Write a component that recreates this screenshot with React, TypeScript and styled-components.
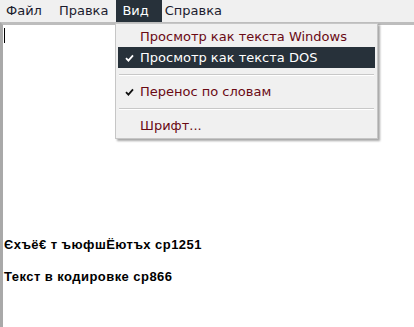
import React from "react";
import styled, { createGlobalStyle } from "styled-components";

const GlobalStyle = createGlobalStyle`
  html, body {
    margin: 0;
    padding: 0;
    background: #ffffff;
  }
  #root {
    height: 327px;
  }
`;

const menuItems = [
  { label: "Файл", active: false, after: 5 },
  { label: "Правка", active: false, after: 2 },
  { label: "Вид", active: true, after: -3 },
  { label: "Справка", active: false, after: 0 },
];

interface DropItem {
  label: string;
  checked?: boolean;
  highlighted?: boolean;
  separatorAfter?: boolean;
}

const viewItems: DropItem[] = [
  { label: "Просмотр как текста Windows" },
  { label: "Просмотр как текста DOS", checked: true, highlighted: true, separatorAfter: true },
  { label: "Перенос по словам", checked: true, separatorAfter: true },
  { label: "Шрифт..." },
];

const Check = () => (
  <svg width="9" height="8" viewBox="0 0 9 8">
    <path d="M1 4.2 L3.4 6.6 L8 1.4" fill="none" stroke="currentColor" strokeWidth="1.8" />
  </svg>
);

const App = () => {
  return (
    <Window>
      <GlobalStyle />
      <MenuBar>
        {menuItems.map((m) => (
          <MenuTitle key={m.label} active={m.active} after={m.after}>
            {m.label}
          </MenuTitle>
        ))}
      </MenuBar>
      <Editor>
        <Caret />
        <BodyLine style={{ marginTop: 194 }}>Єхъё€ т ъюфшЁютъх cp1251</BodyLine>
        <BodyLine style={{ marginTop: 17 }}>Текст в кодировке cp866</BodyLine>
      </Editor>
      <Dropdown>
        {viewItems.map((item) => (
          <React.Fragment key={item.label}>
            <DropRow highlighted={item.highlighted}>
              <CheckCell highlighted={item.highlighted}>{item.checked && <Check />}</CheckCell>
              {item.label}
            </DropRow>
            {item.separatorAfter && <Separator />}
          </React.Fragment>
        ))}
      </Dropdown>
    </Window>
  );
};

export default App;

const Window = styled.div`
  position: relative;
  height: 327px;
  display: flex;
  flex-direction: column;
  font-family: "DejaVu Sans", "Noto Sans", sans-serif;
  overflow: hidden;
`;

const MenuBar = styled.div`
  height: 22px;
  flex: none;
  display: flex;
  align-items: stretch;
  background: #f0f0f0;
`;

const MenuTitle = styled.div<{ active?: boolean; after: number }>`
  display: flex;
  align-items: center;
  padding: ${(p) => (p.active ? "0 13px 1px 6px" : "0 6px 1px 6px")};
  margin-right: ${(p) => p.after}px;
  font-size: 13px;
  color: ${(p) => (p.active ? "#ffffff" : "#1c1c2e")};
  background: ${(p) => (p.active ? "#27313a" : "transparent")};
  position: relative;
  z-index: ${(p) => (p.active ? 1 : 0)};
`;

const Editor = styled.div`
  flex: 1;
  background: #ffffff;
  border-left: 3px solid #a9a9a9;
  border-top: 3px solid #bdbdbd;
  padding: 3px 0 0 1px;
  display: flex;
  flex-direction: column;
`;

const Caret = styled.div`
  width: 1px;
  height: 15px;
  background: #000;
`;

const BodyLine = styled.div`
  font-family: "Liberation Sans", Arial, sans-serif;
  font-weight: bold;
  font-size: 13px;
  letter-spacing: 0.45px;
  color: #000;
  line-height: 15px;
  white-space: nowrap;
`;

const Dropdown = styled.div`
  position: absolute;
  left: 115px;
  top: 23px;
  width: 257px;
  padding: 2px;
  background: #f0f0f0;
  border: 1px solid #c6c6c6;
  box-shadow: 2px 2px 2px rgba(0, 0, 0, 0.35);
`;

const DropRow = styled.div<{ highlighted?: boolean }>`
  height: 21px;
  display: flex;
  align-items: center;
  font-size: 13px;
  white-space: nowrap;
  color: ${(p) => (p.highlighted ? "#ffffff" : "#6a0a14")};
  background: ${(p) => (p.highlighted ? "#27313a" : "transparent")};
`;

const CheckCell = styled.span<{ highlighted?: boolean }>`
  width: 22px;
  display: flex;
  justify-content: center;
  align-items: center;
  color: ${(p) => (p.highlighted ? "#ffffff" : "#111111")};
`;

const Separator = styled.div`
  height: 1px;
  margin: 6px 1px 5px 1px;
  background: #c8c8c8;
  border-bottom: 1px solid #ffffff;
`;
